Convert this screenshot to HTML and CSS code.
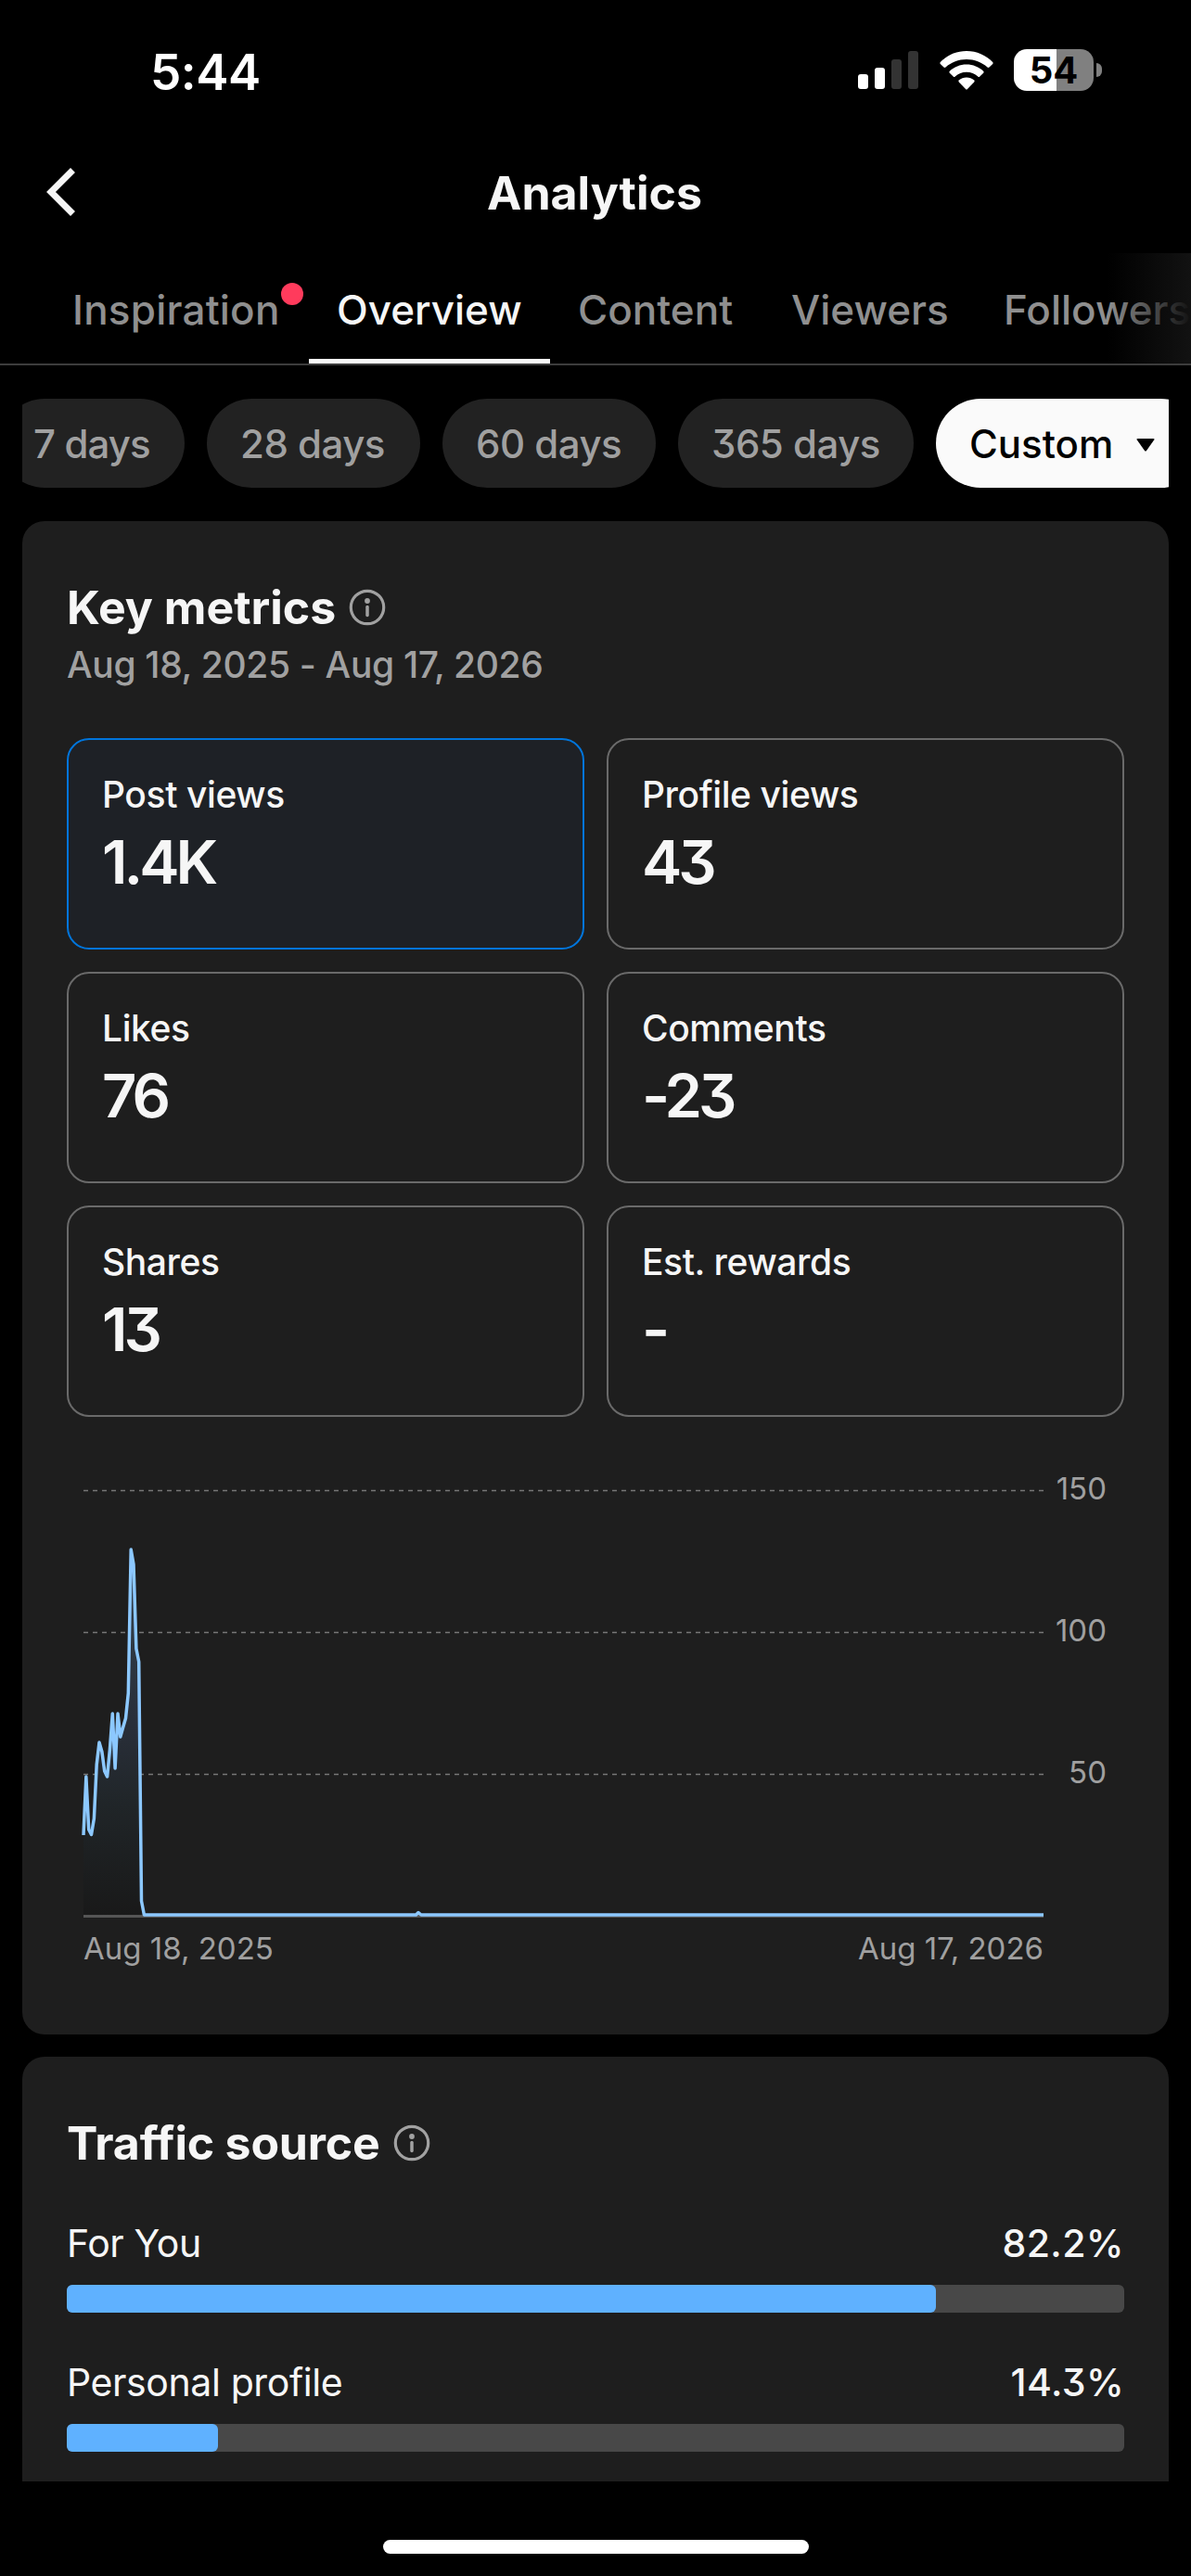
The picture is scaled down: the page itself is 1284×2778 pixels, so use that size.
FILE: index.html
```html
<!DOCTYPE html>
<html lang="en">
<head>
    <meta charset="UTF-8">
    <meta name="viewport" content="width=device-width, initial-scale=1.0">
    <title>Analytics</title>
    <link rel="stylesheet" href="styles.css">
</head>
<body>
    <div class="status-bar">
        <div class="time">5:44</div>
        <div class="status-icons">
            <svg class="signal" width="65" height="41" viewBox="0 0 65 41">
                <rect x="0" y="25" width="11" height="16" rx="3" fill="#fff"/>
                <rect x="18" y="18" width="11" height="23" rx="3" fill="#fff"/>
                <rect x="36" y="9" width="11" height="32" rx="3" fill="#333"/>
                <rect x="54" y="0" width="11" height="41" rx="3" fill="#333"/>
            </svg>
            <svg class="wifi" width="58" height="42" viewBox="0 0 58 42" fill="#fff">
                <path d="M29 0C40 0 50 4.500 57.200 12Q58 13 57.200 14L53.500 17.600Q52.500 18.500 51.500 17.600C45.500 12 37.500 9 29 9S12.500 12 6.500 17.600Q5.500 18.500 4.500 17.600L.8 14Q0 13 .8 12C8 4.500 18 0 29 0Z"/>
                <path d="M29 14.500C36 14.500 42.300 17.200 47.200 21.700Q48.200 22.700 47.200 23.700L43.300 27.500Q42.300 28.500 41.300 27.500C38 24.600 33.700 22.800 29 22.800S20 24.600 16.700 27.500Q15.700 28.500 14.700 27.500L10.800 23.700Q9.800 22.700 10.800 21.700C15.700 17.200 22 14.500 29 14.500Z"/>
                <path d="M29 28.500C32 28.500 35 29.600 37.200 31.500Q38.200 32.500 37.200 33.600L30 41Q29 42 28 41L20.800 33.600Q19.800 32.500 20.800 31.500C23 29.600 26 28.500 29 28.500Z"/>
            </svg>
            <div class="battery"><span class="battery-level">54</span></div>
            <div class="battery-cap"></div>
        </div>
    </div>

    <header class="header">
        <svg class="back" width="34" height="56" viewBox="0 0 34 56">
            <path d="M30.500 4.500L7 28L30.500 51.500" fill="none" stroke="#f6f6f6" stroke-width="7"/>
        </svg>
        <h1>Analytics</h1>
    </header>

    <nav class="tabs">
        <a class="tab inspiration">Inspiration<i class="dot"></i></a>
        <a class="tab active">Overview</a>
        <a class="tab content">Content</a>
        <a class="tab viewers">Viewers</a>
        <a class="tab followers">Followers</a>
    </nav>

    <div class="chips">
        <span class="chip chip-7">7 days</span>
        <span class="chip chip-28">28 days</span>
        <span class="chip chip-60">60 days</span>
        <span class="chip chip-365">365 days</span>
        <span class="chip chip-custom">Custom
            <svg width="20" height="14" viewBox="0 0 20 14"><path d="M1.500 0H18.500Q20 0 19.300 1.300L11 13Q10 14.200 9 13L.7 1.300Q0 0 1.500 0Z"/></svg>
        </span>
    </div>

    <main class="content-area">
        <section class="card key-metrics">
            <div class="card-title">
                <h2 class="title-key">Key metrics</h2>
                <svg width="40" height="40" viewBox="0 0 40 40">
                    <circle cx="20" cy="20" r="17.700" fill="none" stroke="#a1a1a1" stroke-width="3.200"/>
                    <circle cx="20" cy="13" r="2.900" fill="#a1a1a1"/>
                    <path d="M20 19.500V28.500" stroke="#a1a1a1" stroke-width="3.500" stroke-linecap="round"/>
                </svg>
            </div>
            <p class="date-range">Aug 18, 2025 - Aug 17, 2026</p>

            <div class="metrics">
                <div class="metric selected">
                    <div class="metric-label">Post views</div>
                    <div class="metric-value">1.4K</div>
                </div>
                <div class="metric">
                    <div class="metric-label">Profile views</div>
                    <div class="metric-value">43</div>
                </div>
                <div class="metric">
                    <div class="metric-label">Likes</div>
                    <div class="metric-value">76</div>
                </div>
                <div class="metric">
                    <div class="metric-label">Comments</div>
                    <div class="metric-value">-23</div>
                </div>
                <div class="metric">
                    <div class="metric-label">Shares</div>
                    <div class="metric-value">13</div>
                </div>
                <div class="metric">
                    <div class="metric-label">Est. rewards</div>
                    <div class="metric-value">-</div>
                </div>
            </div>

            <svg class="chart" width="1140" height="570" viewBox="0 0 1140 570">
                <defs>
                    <linearGradient id="area" x1="0" y1="0" x2="0" y2="1">
                        <stop offset="0" stop-color="#34434f"/>
                        <stop offset="0.5" stop-color="#282e38"/>
                        <stop offset="0.7" stop-color="#202528"/>
                        <stop offset="1" stop-color="#191919"/>
                    </linearGradient>
                </defs>
                <g transform="translate(18 39)">
                    <g class="grid-lines">
                        <path d="M0 .5H1035M0 153.500H1035M0 306.500H1035"/>
                    </g>
                    <path d="M0 459V372L2.840 307L5.700 366L8.500 371.500L11.400 354L14.200 296L17 272L19.900 282L22.700 303L25.600 309L28.400 280L31.300 239L34.100 302L37 239L39.800 266L42.600 256L45.500 246L48.300 219L51.200 64L54 80L56.900 171L59.700 185L62.500 443L65.400 458V459Z" fill="url(#area)"/>
                    <path d="M0 459.500H1035" stroke="#555" stroke-width="3"/>
                    <path class="line" d="M0 372L2.840 309L5.700 366L8.500 371.500L11.400 354L14.200 296L17 272L19.900 282L22.700 303L25.600 309L28.400 280L31.300 241L34.100 300L37 241L39.800 266L42.600 256L45.500 246L48.300 219L51.200 64L54 80L56.900 171L59.700 185L62.500 443L65.400 458H358.500L361 455.500L364 458H1035"/>
                </g>
                <g class="chart-labels">
                    <text x="1121" y="49" text-anchor="end">150</text>
                    <text x="1121" y="201.500" text-anchor="end">100</text>
                    <text x="1121" y="354.500" text-anchor="end">50</text>
                    <text x="18" y="545">Aug 18, 2025</text>
                    <text x="1053" y="545" text-anchor="end">Aug 17, 2026</text>
                </g>
            </svg>
        </section>

        <section class="card traffic">
            <div class="card-title">
                <h2 class="title-traffic">Traffic source</h2>
                <svg width="40" height="40" viewBox="0 0 40 40">
                    <circle cx="20" cy="20" r="17.700" fill="none" stroke="#a1a1a1" stroke-width="3.200"/>
                    <circle cx="20" cy="13" r="2.900" fill="#a1a1a1"/>
                    <path d="M20 19.500V28.500" stroke="#a1a1a1" stroke-width="3.500" stroke-linecap="round"/>
                </svg>
            </div>
            <div class="source">
                <div class="source-row"><span>For You</span><span class="percent">82.2%</span></div>
                <div class="bar"><div class="bar-fill" style="width: 82.2%"></div></div>
            </div>
            <div class="source">
                <div class="source-row"><span>Personal profile</span><span class="percent">14.3%</span></div>
                <div class="bar"><div class="bar-fill" style="width: 14.3%"></div></div>
            </div>
        </section>
    </main>

    <div class="home-indicator"></div>
</body>
</html>
```
FILE: styles.css
```css
* {
    box-sizing: border-box;
}
body {
    margin: 0;
    width: 1284px;
    height: 2778px;
    overflow: hidden;
    display: flex;
    flex-direction: column;
    background-color: #000;
    color: #f6f6f6;
    font-family: Inter, "Liberation Sans", sans-serif;
    font-feature-settings: "cv09";
}
h1, h2, p {
    margin: 0;
}

/* status bar */
.status-bar {
    height: 154px;
    flex-shrink: 0;
    display: flex;
    justify-content: space-between;
    padding: 0 96px 0 162px;
}
.time {
    margin-top: 48px;
    line-height: 60px;
    font-size: 53px;
    font-weight: 600;
    letter-spacing: -0.5px;
    color: #fff;
}
.status-icons {
    display: flex;
    align-items: center;
    height: 45px;
    margin-top: 53px;
}
.wifi {
    margin: 0 22px 0 23px;
}
.battery {
    width: 86px;
    height: 45px;
    border-radius: 14px;
    background: linear-gradient(to right, #fff 54%, #808080 54%);
    text-align: center;
}
.battery-level {
    color: #000;
    font-size: 40px;
    font-weight: 700;
    line-height: 45px;
}
.battery-cap {
    width: 6px;
    height: 15px;
    margin-left: 3px;
    border-radius: 0 6px 6px 0;
    background: #808080;
}

/* page header */
.header {
    height: 119px;
    flex-shrink: 0;
    display: flex;
    align-items: flex-start;
    padding-left: 48px;
}
.back {
    margin-top: 25px;
}
h1 {
    width: 1120px;
    margin-left: -1px;
    text-align: center;
    font-size: 50px;
    font-weight: 700;
    line-height: 60px;
    margin-top: 24px;
}

/* tabs */
.tabs {
    position: relative;
    height: 121px;
    flex-shrink: 0;
    display: flex;
    padding-left: 47px;
    overflow: hidden;
    border-bottom: 2px solid #3c3c3c;
}
.tabs::after {
    content: "";
    position: absolute;
    top: 0;
    right: 0;
    width: 90px;
    height: 120px;
    background: linear-gradient(to right, rgba(18, 18, 18, 0), #121212);
}
.tab {
    position: relative;
    flex-shrink: 0;
    padding: 31px 0 0 30px;
    height: 120px;
    font-size: 44px;
    font-weight: 500;
    line-height: 60px;
    color: #8f8f8f;
    white-space: nowrap;
}
.inspiration {
    width: 286px;
    padding-left: 31px;
    letter-spacing: 0.2px;
}
.active {
    width: 260px;
    color: #f6f6f6;
    border-bottom: 6px solid #fafafa;
}
.content {
    width: 230px;
}
.viewers {
    width: 229px;
}
.dot {
    position: absolute;
    left: 256px;
    top: 32px;
    width: 24px;
    height: 24px;
    border-radius: 50%;
    background: #ff3b5c;
}

/* date filter */
.chips {
    display: flex;
    flex-shrink: 0;
    gap: 24px;
    height: 96px;
    margin: 36px 24px;
    overflow: hidden;
}
.chip {
    flex-shrink: 0;
    display: flex;
    align-items: center;
    padding-left: 36px;
    border-radius: 48px;
    font-size: 42px;
    font-weight: 500;
    letter-spacing: -0.5px;
    color: #a0a0a0;
    background: #222;
    white-space: nowrap;
}
.chip-7 {
    width: 199px;
    margin-left: -24px;
    letter-spacing: -0.9px;
}
.chip-28, .chip-60 {
    width: 230px;
}
.chip-365 {
    width: 254px;
}
.chip-custom {
    width: 290px;
    letter-spacing: 0;
    color: #000;
    background: #fafafa;
}
.chip-custom svg {
    margin-left: 25px;
    margin-top: 3px;
}

/* cards */
.content-area {
    height: 2114px;
    flex-shrink: 0;
    overflow: hidden;
    padding: 0 24px;
}
.card {
    padding: 63px 48px 0;
    border-radius: 24px;
    background: #1e1e1e;
}
.key-metrics {
    height: 1632px;
    margin-bottom: 24px;
}
.traffic {
    height: 700px;
}
.card-title {
    display: flex;
    align-items: center;
    height: 60px;
}
h2 {
    font-size: 50px;
    font-weight: 700;
    line-height: 60px;
    white-space: nowrap;
}
.title-key {
    width: 304px;
}
.title-traffic {
    width: 352px;
    letter-spacing: -0.2px;
}
.date-range {
    margin-top: 8px;
    font-size: 39px;
    font-weight: 500;
    line-height: 48px;
    letter-spacing: -0.33px;
    color: #a1a1a1;
}
.metrics {
    display: grid;
    grid-template-columns: 1fr 1fr;
    grid-auto-rows: 228px;
    gap: 24px;
    margin-top: 55px;
}
.metric {
    padding: 35px 36px 0;
    border: 2px solid #6a6a6a;
    border-radius: 24px;
}
.metric.selected {
    border-color: #0075db;
    background: #1e2126;
}
.metric-label {
    font-size: 39px;
    font-weight: 500;
    line-height: 48px;
    letter-spacing: -0.4px;
}
.metric-value {
    margin-top: 13px;
    font-size: 65px;
    font-weight: 600;
    line-height: 72px;
    letter-spacing: -4px;
}

/* chart */
.chart {
    display: block;
    margin-top: 40px;
}
.grid-lines {
    stroke: #777;
    stroke-width: 1.5;
    stroke-dasharray: 5 5;
}
.line {
    fill: none;
    stroke: #8cc8ff;
    stroke-width: 3.5;
    stroke-linejoin: round;
}
.chart-labels {
    fill: #a0a0a0;
    font-size: 33px;
}

/* traffic source */
.source {
    margin-bottom: 51px;
}
.traffic .card-title {
    margin-bottom: 53px;
}
.source-row {
    display: flex;
    justify-content: space-between;
    font-size: 41px;
    line-height: 50px;
    letter-spacing: -0.4px;
}
.percent {
    font-weight: 500;
    letter-spacing: 0.4px;
}
.bar {
    height: 30px;
    margin-top: 20px;
    border-radius: 6px;
    background: #484848;
}
.source + .source {
    margin-top: -1px;
}
.bar-fill {
    height: 30px;
    border-radius: 6px;
    background: #5fb1ff;
}

.home-indicator {
    width: 459px;
    height: 15px;
    margin: 63px 0 0 413px;
    border-radius: 8px;
    background: #fff;
}
```
